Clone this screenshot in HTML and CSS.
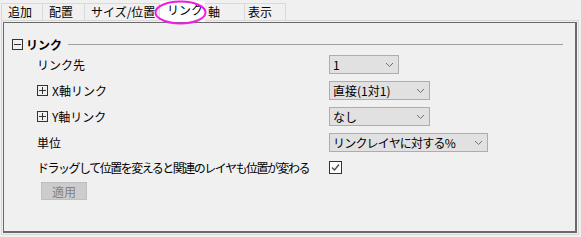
FILE: index.html
```html
<!DOCTYPE html>
<html lang="ja">
<head>
    <meta charset="UTF-8">
    <title>レイヤの管理</title>
    <link rel="stylesheet" href="styles.css">
</head>
<body>
    <div class="tabs">
        <div class="tab tab-add">追加</div>
        <div class="tab tab-arrange">配置</div>
        <div class="tab tab-size">サイズ/位置</div>
        <div class="tab tab-link active">リンク</div>
        <div class="tab tab-axis">軸</div>
        <div class="tab tab-show">表示</div>
    </div>

    <!-- 注釈の丸印 -->
    <svg class="mark" width="53" height="25" viewBox="0 0 53 25">
        <ellipse cx="26.5" cy="12.5" rx="25" ry="11" fill="none" stroke="#f01ee0" stroke-width="2"/>
    </svg>

    <div class="panel">
        <div class="panel-inner">
            <div class="group-head">
                <svg class="toggle" width="11" height="11" viewBox="0 0 11 11">
                    <rect x="0.5" y="0.5" width="10" height="10" fill="none" stroke="#333"/>
                    <line x1="2" y1="5.5" x2="9" y2="5.5" stroke="#333"/>
                </svg>
                <span class="group-title">リンク</span>
                <div class="group-line"></div>
            </div>

            <div class="rows">
                <div class="label">リンク先</div>
                <div class="combo w70">
                    <span>1</span>
                    <svg width="7" height="4" viewBox="0 0 7 4"><polyline points="0,0 3.5,3.5 7,0" fill="none" stroke="#707070"/></svg>
                </div>

                <div class="label">
                    <svg class="toggle" width="11" height="11" viewBox="0 0 11 11">
                        <rect x="0.5" y="0.5" width="10" height="10" fill="none" stroke="#333"/>
                        <line x1="2" y1="5.5" x2="9" y2="5.5" stroke="#333"/>
                        <line x1="5.5" y1="2" x2="5.5" y2="9" stroke="#333"/>
                    </svg>
                    X軸リンク
                </div>
                <div class="combo w101">
                    <span>直接(1対1)</span>
                    <svg width="7" height="4" viewBox="0 0 7 4"><polyline points="0,0 3.5,3.5 7,0" fill="none" stroke="#707070"/></svg>
                </div>

                <div class="label">
                    <svg class="toggle" width="11" height="11" viewBox="0 0 11 11">
                        <rect x="0.5" y="0.5" width="10" height="10" fill="none" stroke="#333"/>
                        <line x1="2" y1="5.5" x2="9" y2="5.5" stroke="#333"/>
                        <line x1="5.5" y1="2" x2="5.5" y2="9" stroke="#333"/>
                    </svg>
                    Y軸リンク
                </div>
                <div class="combo w101">
                    <span>なし</span>
                    <svg width="7" height="4" viewBox="0 0 7 4"><polyline points="0,0 3.5,3.5 7,0" fill="none" stroke="#707070"/></svg>
                </div>

                <div class="label">単位</div>
                <div class="combo w159">
                    <span class="tight">リンクレイヤに対する%</span>
                    <svg width="7" height="4" viewBox="0 0 7 4"><polyline points="0,0 3.5,3.5 7,0" fill="none" stroke="#707070"/></svg>
                </div>

                <div class="label check-label">ドラッグして位置を変えると関連のレイヤも位置が変わる</div>
                <div class="check">
                    <svg width="13" height="13" viewBox="0 0 13 13">
                        <rect x="0.5" y="0.5" width="12" height="12" fill="#fff" stroke="#333"/>
                        <polyline points="3,6.5 5.5,9 10,3.5" fill="none" stroke="#444" stroke-width="1.2"/>
                    </svg>
                </div>
            </div>

            <button class="apply" disabled>適用</button>
        </div>
    </div>
</body>
</html>
```

FILE: styles.css
```css
* {
    margin: 0;
    padding: 0;
    box-sizing: border-box;
}

body {
    background-color: #f0f0f0;
    color: #000;
    font-family: 'Noto Sans CJK JP', 'Liberation Sans', sans-serif;
    font-size: 12px;
    line-height: 1;
    width: 581px;
    height: 237px;
    position: relative;
    overflow: hidden;
}

/* タブ */
.tabs {
    display: flex;
    align-items: flex-end;
    height: 20px;
    padding-left: 1px;
    position: relative;
    z-index: 2;
}

.tab {
    height: 17px;
    border: 1px solid #d9d9d9;
    border-bottom: none;
    border-left: none;
    padding-top: 2px;
    background-color: #f0f0f0;
}

.tab-add { width: 42px; padding-left: 6px; border-left: 1px solid #d9d9d9; }
.tab-arrange { width: 42px; padding-left: 6px; }
.tab-size { width: 75px; padding-left: 6px; }
.tab-link { width: 45px; padding-left: 7px; }
.tab-axis { width: 40px; padding-left: 3px; }
.tab-show { width: 41px; padding-left: 3px; }

.tab.active {
    background-color: #fff;
    height: 21px;
    margin-bottom: -2px;
    padding-top: 3px;
    border: none;
}

.mark {
    position: absolute;
    left: 154px;
    top: 0;
    z-index: 3;
}

/* パネル */
.panel {
    margin-left: 1px;
    width: 578px;
    height: 215px;
    border: 1px solid #d9d9d9;
    padding: 1px;
}

.panel-inner {
    height: 100%;
    border: 1px solid #696969;
    border-right-width: 2px;
    border-bottom-width: 2px;
    padding-top: 16px;
}

.group-head {
    display: flex;
    align-items: center;
    height: 11px;
    padding-left: 8px;
    padding-right: 12px;
}

.group-title {
    font-weight: bold;
    margin-left: 3px;
}

.group-line {
    flex: 1;
    height: 1px;
    background-color: #a0a0a0;
    margin-left: 6px;
}

.toggle {
    flex: none;
}

.rows {
    display: grid;
    grid-template-columns: 292px auto;
    row-gap: 7px;
    align-items: center;
    margin-top: 5px;
    padding-left: 33px;
}

.label {
    display: flex;
    align-items: center;
    gap: 4px;
    white-space: nowrap;
}

.combo {
    display: flex;
    align-items: center;
    justify-content: space-between;
    height: 19px;
    border: 1px solid #adadad;
    background-color: #e1e1e1;
    padding: 0 5px 0 3px;
    white-space: nowrap;
}

.tight {
    letter-spacing: -0.8px;
}

.w70 { width: 70px; }
.w101 { width: 101px; }
.w159 { width: 159px; }

.check-label,
.check {
    margin-top: 2px;
    height: 13px;
}

.check-label {
    letter-spacing: -1.5px;
}

.check svg {
    display: block;
}

.apply {
    display: block;
    margin: 8px 0 0 37px;
    width: 46px;
    height: 18px;
    background-color: #cccccc;
    border: 1px solid #bfbfbf;
    color: #838383;
    font-family: inherit;
    font-size: 12px;
}
```
